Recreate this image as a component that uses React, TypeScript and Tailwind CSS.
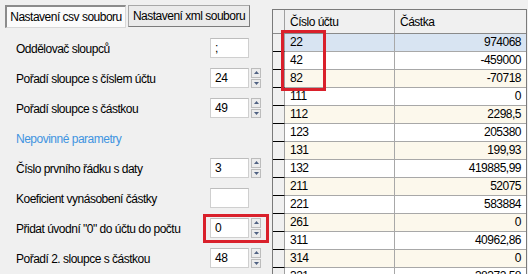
import React from "react";

const FONT = "font-['Liberation_Sans',Arial,sans-serif]";

const rows: [string, string][] = [
  ["22", "974068"],
  ["42", "-459000"],
  ["82", "-70718"],
  ["111", "0"],
  ["112", "2298,5"],
  ["123", "205380"],
  ["131", "199,93"],
  ["132", "419885,99"],
  ["211", "52075"],
  ["221", "583884"],
  ["261", "0"],
  ["311", "40962,86"],
  ["314", "0"],
  ["321", "38372,58"],
];

function Arrow({ down }: { down?: boolean }) {
  return (
    <svg width="5" height="3" viewBox="0 0 5 3">
      <polygon points={down ? "0,0 5,0 2.5,3" : "2.5,0 5,3 0,3"} fill="#4f6182" />
    </svg>
  );
}

function Spinner() {
  return (
    <div className="flex flex-col gap-[1px] w-[10px] h-[20px]">
      <div className="flex-1 flex items-center justify-center bg-[#ececec] border border-[#bcbcbc]">
        <Arrow />
      </div>
      <div className="flex-1 flex items-center justify-center bg-[#ececec] border border-[#bcbcbc]">
        <Arrow down />
      </div>
    </div>
  );
}

function FormRow({
  label,
  value,
  spin,
  highlight,
}: {
  label: string;
  value: string;
  spin?: boolean;
  highlight?: boolean;
}) {
  return (
    <div className="relative flex items-center h-[30px]">
      <div className="w-[194px] shrink-0 text-black pt-[2px] whitespace-nowrap">{label}</div>
      <div className="w-[39px] h-[20px] bg-white border border-[#cfcfcf] border-t-[#bdbdbd] pl-[4px] leading-[18px] text-black">
        {value}
      </div>
      {spin && (
        <div className="ml-[2px]">
          <Spinner />
        </div>
      )}
      {highlight && (
        <div className="absolute left-[187px] top-[1px] w-[66px] h-[29px] border-[3px] border-[#d9202b]" />
      )}
    </div>
  );
}

export default function App() {
  return (
    <div className={`${FONT} text-[12px] tracking-[-0.5px] w-[528px] h-[274px] bg-[#f0f0f0] flex overflow-hidden relative`}>
      {/* Left panel */}
      <div className="w-[272px] shrink-0 flex flex-col">
        <div className="flex items-start gap-[2px] pl-[5px] pt-[5px]">
          <div className="w-[121px] h-[23px] bg-[#fbfbfb] border-t-2 border-l-2 border-[#8c8c8c] border-r border-b border-r-[#d8d8d8] border-b-[#d8d8d8] flex items-center justify-center text-black whitespace-nowrap">
            Nastavení csv souboru
          </div>
          <div className="w-[122px] h-[22px] bg-[#ebebeb] border border-[#a8a8a8] border-b-[#7c7c7c] border-r-[#7c7c7c] flex items-center justify-center text-black whitespace-nowrap">
            Nastavení xml souboru
          </div>
        </div>
        <div className="pl-[16px] pt-[5px] flex flex-col">
          <FormRow label="Oddělovač sloupců" value=";" />
          <FormRow label="Pořadí sloupce s číslem účtu" value="24" spin />
          <FormRow label="Pořadí sloupce s částkou" value="49" spin />
          <div className="h-[30px] flex items-center text-[#3f94e0] pt-[2px]">Nepovinné parametry</div>
          <FormRow label="Číslo prvního řádku s daty" value="3" spin />
          <FormRow label="Koeficient vynásobení částky" value="" />
          <FormRow label={'Přidat úvodní "0" do účtu do počtu'} value="0" spin highlight />
          <FormRow label="Pořadí 2. sloupce s částkou" value="48" spin />
        </div>
      </div>

      {/* Grid */}
      <div className="flex-1 pt-[9px] relative">
        <div className="w-[255px] h-full border-l border-r border-t border-[#7a7a7a] flex flex-col bg-white">
          {/* header */}
          <div className="flex h-[24px] shrink-0 bg-[#f0f0f0] border-b border-[#8a8a8a]">
            <div className="w-[12px] shrink-0 border-r border-[#a0a0a0]" />
            <div className="w-[110px] shrink-0 border-r border-[#a0a0a0] pl-[5px] flex items-center text-black">
              Číslo účtu
            </div>
            <div className="flex-1 pl-[5px] flex items-center text-black">Částka</div>
          </div>
          {rows.map(([acc, amt], i) => {
            const bg = i === 0 ? "bg-[#d8e4f2]" : i % 2 === 0 ? "bg-[#fcf8ec]" : "bg-white";
            return (
              <div key={acc} className="flex h-[18px] shrink-0">
                <div className="w-[12px] shrink-0 bg-[#f0f0f0] border-r border-[#a0a0a0] border-b border-b-black" />
                <div className={`w-[110px] shrink-0 ${bg} border-r border-b border-[#a8a8a8] pl-[5px] leading-[17px] text-black`}>
                  {acc}
                </div>
                <div className={`flex-1 ${bg} border-b border-[#a8a8a8] pr-[5px] text-right leading-[17px] text-black`}>
                  {amt}
                </div>
              </div>
            );
          })}
        </div>
        <div className="absolute left-[9px] top-[30px] w-[45px] h-[61px] border-[3px] border-[#d9202b]" />
      </div>
    </div>
  );
}
